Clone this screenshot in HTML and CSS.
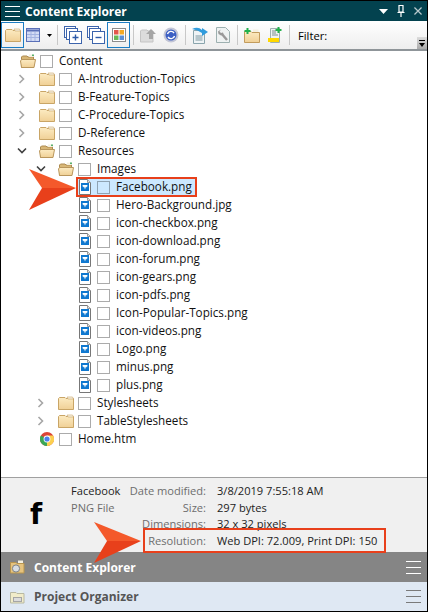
FILE: index.html
```html
<!DOCTYPE html>
<html lang="en">
<head>
  <meta charset="UTF-8" />
  <meta name="viewport" content="width=device-width, initial-scale=1.0"/>
  <title>Content Explorer</title>
  <link rel="stylesheet" href="styles.css">
</head>
<body>

  <svg class="defs" width="0" height="0">
    <defs>
      <linearGradient id="tan" x1="0" y1="0" x2="0" y2="1">
        <stop offset="0" stop-color="#fcebc2"/>
        <stop offset="1" stop-color="#f0d096"/>
      </linearGradient>
      <symbol id="folder" viewBox="0 0 16 14">
        <path d="M.5 13.5V2.5L1.5 1.5H7L8 2.5H15.5V13.5Z" fill="url(#tan)" stroke="#c9a566"/>
        <path d="M9 1H14.5L15.5 3H10Z" fill="#f7f3e6" stroke="#c9a566" stroke-width=".6"/>
      </symbol>
      <symbol id="folder-open" viewBox="0 0 16 14">
        <path d="M1.5 13.5V3L2.5 2H7L8 3H13.5V6H1.5Z" fill="#d8b777" stroke="#ad8a50"/>
        <path d="M9 0.5H13V3H9Z" fill="#f5f1e0"/>
        <path d="M12 .5H14V2H12Z" fill="#56b06d"/>
        <path d="M.5 7L1.5 5.5H15.5L14 13.5H1.5Z" fill="url(#tan)" stroke="#b9965c"/>
      </symbol>
      <symbol id="file" viewBox="0 0 12 16">
        <path d="M.5 .5H8.5L11.5 3.5V15.5H.5Z" fill="#fff" stroke="#777"/>
        <path d="M8.5 .5V3.5H11.5" fill="#e4e4e4" stroke="#999"/>
        <rect x="2" y="4" width="8" height="8" fill="#0f78d0"/>
        <path d="M3.5 6H8.5L8 8.5L7 7.5L6 10.5L5 7.5L4 8.5Z" fill="#fff"/>
      </symbol>
      <symbol id="chrome" viewBox="0 0 14 14">
        <circle cx="7" cy="7" r="7" fill="#db4437"/>
        <path d="M7 7L.9 3.5A7 7 0 0 0 7 14L10.5 7Z" fill="#3aa757"/>
        <path d="M7 3.5H13.1A7 7 0 0 1 7 14Z" fill="#fcd04f"/>
        <circle cx="7" cy="7" r="3.4" fill="#fff"/>
        <circle cx="7" cy="7" r="2.6" fill="#4a80ec"/>
      </symbol>
      <symbol id="chev-right" viewBox="0 0 8 10">
        <path d="M1.5 1L5.5 5L1.5 9" fill="none" stroke="#a6a6a6" stroke-width="1.6"/>
      </symbol>
      <symbol id="chev-down" viewBox="0 0 10 8">
        <path d="M1 1.5L5 5.5L9 1.5" fill="none" stroke="#404040" stroke-width="1.6"/>
      </symbol>
      <symbol id="arrow" viewBox="0 0 47 41">
        <path d="M0 0L47 19L13 19Z" fill="#f4592b"/>
        <path d="M13 19H47L0 41Z" fill="#e8401b"/>
      </symbol>
      <symbol id="stack" viewBox="0 0 18 18">
        <rect x=".5" y=".5" width="11" height="11" fill="#fff" stroke="#3c64ac"/>
        <rect x="2.5" y="2.5" width="11" height="11" fill="#fff" stroke="#3c64ac"/>
        <rect x="5.5" y="5.5" width="12" height="12" fill="#fff" stroke="#3c64ac"/>
      </symbol>
    </defs>
  </svg>

  <div class="panel">
    <div class="titlebar">
      <div class="lines"><i></i><i></i><i></i></div>
      <span class="title">Content Explorer</span>
      <div class="title-btns">
        <svg width="9" height="5" viewBox="0 0 9 5"><path d="M0 0H9L4.5 5Z" fill="#fff"/></svg>
        <svg width="8" height="12" viewBox="0 0 8 12"><path d="M2 .5H6V7H2ZM.5 7.5H7.5M4 8V12" fill="none" stroke="#fff" stroke-width="1.2"/></svg>
        <svg width="8" height="8" viewBox="0 0 9 9"><path d="M.5 .5L8.5 8.5M8.5 .5L.5 8.5" stroke="#b9c9cd" stroke-width="1.4"/></svg>
      </div>
    </div>

    <div class="toolbar">
      <div class="tool active"><svg width="16" height="14"><use href="#folder"/></svg></div>
      <div class="tool grid-tool">
        <svg width="14" height="14" viewBox="0 0 14 14">
          <rect x=".5" y=".5" width="13" height="13" fill="#d3dcf5" stroke="#5a70b8"/>
          <path d="M.5 2.5H13.5" stroke="#5a70b8" stroke-width="2"/>
          <path d="M1 6.5H13M1 9.5H13M5 4V13M9 4V13" stroke="#a3b3e2"/>
        </svg>
        <svg class="caret" width="5" height="3" viewBox="0 0 5 3"><path d="M0 0H5L2.5 3Z" fill="#000"/></svg>
      </div>
      <span class="sep"></span>
      <div class="tool plain">
        <svg width="18" height="18" viewBox="0 0 18 18">
          <use href="#stack"/>
          <path d="M8.5 11.5H14.5M11.5 8.5V14.5" stroke="#2d5aa8" stroke-width="1.4"/>
        </svg>
      </div>
      <div class="tool plain">
        <svg width="18" height="18" viewBox="0 0 18 18">
          <use href="#stack"/>
          <path d="M8.5 11.5H14.5" stroke="#2d5aa8" stroke-width="1.4"/>
        </svg>
      </div>
      <div class="tool active">
        <svg width="14" height="14" viewBox="0 0 14 14">
          <rect x=".5" y=".5" width="13" height="13" fill="#fff" stroke="#8c8c8c"/>
          <rect x="2" y="2" width="4.5" height="4.5" fill="#e2574c"/>
          <rect x="7.5" y="2" width="4.5" height="4.5" fill="#f4a924"/>
          <rect x="2" y="7.5" width="4.5" height="4.5" fill="#67b956"/>
          <rect x="7.5" y="7.5" width="4.5" height="4.5" fill="#5a8fd8"/>
        </svg>
      </div>
      <span class="sep"></span>
      <div class="tool wide">
        <svg width="17" height="15" viewBox="0 0 17 15">
          <path d="M.5 14V3L1.5 2H7L8 3H13V14Z" fill="#dcdcdc" stroke="#c4c4c4"/>
          <path d="M11 1L16 6H13V11H9V6H6Z" fill="#a5a5a5"/>
        </svg>
      </div>
      <div class="tool wide">
        <svg width="16" height="16" viewBox="0 0 16 16">
          <circle cx="8" cy="8" r="7.5" fill="#c3c6d6"/>
          <circle cx="8" cy="8" r="5.5" fill="#3c5fc4"/>
          <path d="M4.5 7A3.6 3.6 0 0 1 11 6M11.5 9A3.6 3.6 0 0 1 5 10" fill="none" stroke="#fff" stroke-width="1.4"/>
        </svg>
      </div>
      <span class="sep"></span>
      <div class="tool wide">
        <svg width="16" height="17" viewBox="0 0 16 17">
          <path d="M1.5 3.5H12.5V16.5H1.5Z" fill="#eef3f5" stroke="#8aa5ad"/>
          <path d="M3.5 9H10.5M3.5 11H10.5M3.5 13H10.5" stroke="#7d97a0"/>
          <path d="M0 2Q6 -1 10 3V1L16 5L10 9V6Q6 3 0 2Z" fill="#2f9bdc"/>
        </svg>
      </div>
      <div class="tool wide">
        <svg width="14" height="16" viewBox="0 0 14 16">
          <path d="M.5 .5H9.5L13.5 4.5V15.5H.5Z" fill="#eef2f2" stroke="#9db0b0"/>
          <path d="M5.5 6.5L11 13" stroke="#999" stroke-width="2.4"/>
          <path d="M5 2.5L3.5 4.5L5 6L7 5.5L7.5 7.5L5 8.5L2.5 7L2 4.5Z" fill="#999"/>
        </svg>
      </div>
      <span class="sep"></span>
      <div class="tool wide">
        <svg width="16" height="15" viewBox="0 0 16 15">
          <path d="M.5 14.5V3.5H7L8 4.5H15.5V14.5Z" fill="url(#tan)" stroke="#c29c5d"/>
          <path d="M9 1.5H14.5V4H9Z" fill="#f5f1e0"/>
          <path d="M2.5 0H4.5V2H6.5V4H4.5V6H2.5V4H.5V2H2.5Z" fill="#22b14c"/>
        </svg>
      </div>
      <div class="tool wide">
        <svg width="14" height="16" viewBox="0 0 14 16">
          <path d="M2.5 1.5H11.5V15.5H2.5Z" fill="#eef3f3" stroke="#9db0b0"/>
          <path d="M4 4H8M4 6H8M4 8H10" stroke="#7d8f8f"/>
          <rect x="0" y="11" width="11" height="4" fill="#ffd800"/>
          <path d="M9.5 0H11.5V2H13.5V4H11.5V6H9.5V4H7.5V2H9.5Z" fill="#22b14c"/>
        </svg>
      </div>
      <span class="sep"></span>
      <span class="filter">Filter:</span>
      <div class="overflow">
        <svg width="6" height="7" viewBox="0 0 6 7"><path d="M0 0H6V1H0ZM0 3H6L3 7Z" fill="#000"/></svg>
      </div>
    </div>

    <div class="tree">
      <div class="row d0">
        <span class="twist"></span>
        <div class="item"><svg class="icon" width="16" height="14"><use href="#folder-open"/></svg><span class="check"></span><span class="label-text">Content</span></div>
      </div>
      <div class="row d1">
        <span class="twist"><svg width="8" height="10"><use href="#chev-right"/></svg></span>
        <div class="item"><svg class="icon" width="16" height="14"><use href="#folder"/></svg><span class="check"></span><span class="label-text">A-Introduction-Topics</span></div>
      </div>
      <div class="row d1">
        <span class="twist"><svg width="8" height="10"><use href="#chev-right"/></svg></span>
        <div class="item"><svg class="icon" width="16" height="14"><use href="#folder"/></svg><span class="check"></span><span class="label-text">B-Feature-Topics</span></div>
      </div>
      <div class="row d1">
        <span class="twist"><svg width="8" height="10"><use href="#chev-right"/></svg></span>
        <div class="item"><svg class="icon" width="16" height="14"><use href="#folder"/></svg><span class="check"></span><span class="label-text">C-Procedure-Topics</span></div>
      </div>
      <div class="row d1">
        <span class="twist"><svg width="8" height="10"><use href="#chev-right"/></svg></span>
        <div class="item"><svg class="icon" width="16" height="14"><use href="#folder"/></svg><span class="check"></span><span class="label-text">D-Reference</span></div>
      </div>
      <div class="row d1">
        <span class="twist"><svg class="down" width="10" height="8"><use href="#chev-down"/></svg></span>
        <div class="item"><svg class="icon" width="16" height="14"><use href="#folder-open"/></svg><span class="check"></span><span class="label-text">Resources</span></div>
      </div>
      <div class="row d2">
        <span class="twist"><svg class="down" width="10" height="8"><use href="#chev-down"/></svg></span>
        <div class="item"><svg class="icon" width="16" height="14"><use href="#folder-open"/></svg><span class="check"></span><span class="label-text">Images</span></div>
      </div>
      <div class="row d3">
        <span class="twist"></span>
        <div class="item selected"><svg class="icon file" width="12" height="16"><use href="#file"/></svg><span class="check"></span><span class="label-text">Facebook.png</span></div>
      </div>
      <div class="row d3">
        <span class="twist"></span>
        <div class="item"><svg class="icon file" width="12" height="16"><use href="#file"/></svg><span class="check"></span><span class="label-text">Hero-Background.jpg</span></div>
      </div>
      <div class="row d3">
        <span class="twist"></span>
        <div class="item"><svg class="icon file" width="12" height="16"><use href="#file"/></svg><span class="check"></span><span class="label-text">icon-checkbox.png</span></div>
      </div>
      <div class="row d3">
        <span class="twist"></span>
        <div class="item"><svg class="icon file" width="12" height="16"><use href="#file"/></svg><span class="check"></span><span class="label-text">icon-download.png</span></div>
      </div>
      <div class="row d3">
        <span class="twist"></span>
        <div class="item"><svg class="icon file" width="12" height="16"><use href="#file"/></svg><span class="check"></span><span class="label-text">icon-forum.png</span></div>
      </div>
      <div class="row d3">
        <span class="twist"></span>
        <div class="item"><svg class="icon file" width="12" height="16"><use href="#file"/></svg><span class="check"></span><span class="label-text">icon-gears.png</span></div>
      </div>
      <div class="row d3">
        <span class="twist"></span>
        <div class="item"><svg class="icon file" width="12" height="16"><use href="#file"/></svg><span class="check"></span><span class="label-text">icon-pdfs.png</span></div>
      </div>
      <div class="row d3">
        <span class="twist"></span>
        <div class="item"><svg class="icon file" width="12" height="16"><use href="#file"/></svg><span class="check"></span><span class="label-text">Icon-Popular-Topics.png</span></div>
      </div>
      <div class="row d3">
        <span class="twist"></span>
        <div class="item"><svg class="icon file" width="12" height="16"><use href="#file"/></svg><span class="check"></span><span class="label-text">icon-videos.png</span></div>
      </div>
      <div class="row d3">
        <span class="twist"></span>
        <div class="item"><svg class="icon file" width="12" height="16"><use href="#file"/></svg><span class="check"></span><span class="label-text">Logo.png</span></div>
      </div>
      <div class="row d3">
        <span class="twist"></span>
        <div class="item"><svg class="icon file" width="12" height="16"><use href="#file"/></svg><span class="check"></span><span class="label-text">minus.png</span></div>
      </div>
      <div class="row d3">
        <span class="twist"></span>
        <div class="item"><svg class="icon file" width="12" height="16"><use href="#file"/></svg><span class="check"></span><span class="label-text">plus.png</span></div>
      </div>
      <div class="row d2">
        <span class="twist"><svg width="8" height="10"><use href="#chev-right"/></svg></span>
        <div class="item"><svg class="icon" width="16" height="14"><use href="#folder"/></svg><span class="check"></span><span class="label-text">Stylesheets</span></div>
      </div>
      <div class="row d2">
        <span class="twist"><svg width="8" height="10"><use href="#chev-right"/></svg></span>
        <div class="item"><svg class="icon" width="16" height="14"><use href="#folder"/></svg><span class="check"></span><span class="label-text">TableStylesheets</span></div>
      </div>
      <div class="row d1">
        <span class="twist"></span>
        <div class="item"><svg class="icon round" width="14" height="14"><use href="#chrome"/></svg><span class="check"></span><span class="label-text">Home.htm</span></div>
      </div>
    </div>

    <div class="details">
      <div class="preview">f</div>
      <div class="meta">
        <span class="name">Facebook</span><span class="label">Date modified:</span><span class="value">3/8/2019 7:55:18 AM</span>
        <span class="kind">PNG File</span><span class="label">Size:</span><span class="value">297 bytes</span>
        <span></span><span class="label">Dimensions:</span><span class="value">32 x 32 pixels</span>
        <span></span><span class="label">Resolution:</span><span class="value">Web DPI: 72.009, Print DPI: 150</span>
      </div>
    </div>

    <div class="tab tab-active">
      <svg width="15" height="14" viewBox="0 0 15 14">
        <path d="M.5 13V2.5H6L7 3.5H14V13Z" fill="#e6c37e" stroke="#b8954f"/>
        <path d="M8 .5H13V3H8Z" fill="#f5f1e0"/>
        <circle cx="6" cy="8.5" r="3.6" fill="#d8dde2" stroke="#7b8187"/>
      </svg>
      <span>Content Explorer</span>
      <div class="lines"><i></i><i></i><i></i></div>
    </div>
    <div class="tab tab-last">
      <svg width="15" height="14" viewBox="0 0 15 14">
        <path d="M.5 13V2.5H6L7 3.5H14V13Z" fill="#f1ecc9" stroke="#b9b9a2"/>
        <path d="M8 .5H13V3H8Z" fill="#e6f0ea"/>
        <rect x="3.5" y="7.5" width="8" height="4" fill="#dcdcdc" stroke="#a5a5a5"/>
      </svg>
      <span>Project Organizer</span>
      <div class="lines"><i></i><i></i><i></i></div>
    </div>

    <!-- callouts drawn over the screenshot -->
    <div class="res-box"></div>
    <svg class="callout callout-tree" width="47" height="41"><use href="#arrow"/></svg>
    <svg class="callout callout-res" width="47" height="41"><use href="#arrow"/></svg>
  </div>

</body>
</html>
```

FILE: styles.css
```css
* {
  box-sizing: border-box;
}
body {
  margin: 0;
  font-family: "Open Sans", sans-serif;
  font-size: 11.7px;
  color: #111;
}
.defs {
  position: absolute;
}
.panel {
  position: relative;
  width: 428px;
  height: 612px;
  border: 1px solid #000;
  display: flex;
  flex-direction: column;
  overflow: hidden;
  background: #fff;
}

/* title bar */
.titlebar {
  height: 20px;
  flex: none;
  background: #03424f;
  color: #fff;
  display: flex;
  align-items: center;
  padding-left: 4px;
}
.title {
  font-weight: 700;
  font-size: 12px;
  margin-left: 5px;
}
.title-btns {
  margin-left: auto;
  display: flex;
  align-items: center;
  gap: 9px;
  padding-right: 5px;
}
.lines {
  width: 15px;
  display: flex;
  flex-direction: column;
  gap: 4px;
}
.lines i {
  display: block;
  height: 1px;
  background: #fff;
}

/* toolbar */
.toolbar {
  position: relative;
  height: 30px;
  flex: none;
  display: flex;
  align-items: center;
  background: linear-gradient(#fff, #eeeeee);
  border-bottom: 2px solid #8f9599;
}
.tool {
  height: 26px;
  display: flex;
  align-items: center;
  justify-content: center;
  flex: none;
}
.active {
  width: 23px;
  border: 1px solid #1c7dc4;
}
.grid-tool {
  width: 30px;
  justify-content: flex-start;
  padding-left: 2px;
}
.caret {
  margin-left: 7px;
}
.plain {
  width: 23px;
}
.wide {
  width: 22.5px;
}
.sep {
  width: 1px;
  height: 20px;
  margin: 0 3px;
  background: #c8c8c8;
  flex: none;
}
.filter {
  margin-left: 5px;
  font-size: 11.2px;
  color: #000;
}
.overflow {
  position: absolute;
  right: 0;
  bottom: 0;
  width: 10px;
  height: 12px;
  background: linear-gradient(#ddd, #aaa);
  display: flex;
  align-items: center;
  justify-content: center;
}

/* tree */
.tree {
  flex: 1;
  padding-top: 1px;
}
.row {
  height: 18px;
  display: flex;
  align-items: center;
}
.d1 { padding-left: 19px; }
.d2 { padding-left: 38px; }
.d3 { padding-left: 57px; }
.twist {
  width: 19px;
  flex: none;
  display: flex;
  align-items: center;
}
.twist svg {
  margin-left: -2px;
}
.twist .down {
  margin-left: -3px;
}
.item {
  display: flex;
  align-items: center;
  height: 18px;
}
.icon {
  flex: none;
  margin-right: 4px;
}
.icon.file {
  margin-left: 2px;
  margin-right: 6px;
}
.icon.round {
  margin-left: 1px;
  margin-right: 5px;
}
.check {
  width: 13px;
  height: 13px;
  flex: none;
  border: 1px solid #ababab;
  background: #fff;
  margin-right: 6px;
}
.label-text {
  margin-bottom: 2px;
  white-space: nowrap;
}
.selected {
  background: #cce8ff;
  outline: 2px solid #e8401b;
  outline-offset: -1px;
  padding-right: 4px;
}
.selected .check {
  background: #cce8ff;
  border-color: #8fa3b3;
}

/* details */
.details {
  height: 75px;
  flex: none;
  background: #f0f0f0;
  border-top: 1px solid #a0a0a0;
  display: flex;
  padding-top: 4px;
  font-size: 11.1px;
}
.preview {
  width: 70px;
  flex: none;
  text-align: center;
  font-family: "DejaVu Sans", sans-serif;
  font-weight: 700;
  font-size: 28px;
  line-height: 40px;
  color: #000;
  padding-top: 13px;
}
.meta {
  display: grid;
  grid-template-columns: 55px 80px auto;
  grid-auto-rows: 16.7px;
  align-items: center;
  white-space: nowrap;
}
.name {
  color: #222;
}
.kind, .label {
  color: #6d6d6d;
}
.label {
  text-align: right;
}
.value {
  margin-left: 11px;
  color: #222;
}

/* bottom tabs */
.tab {
  height: 30px;
  flex: none;
  background: #dfe8f3;
  color: #555;
  font-weight: 700;
  font-size: 12px;
  display: flex;
  align-items: center;
  padding: 0 6px 0 9px;
}
.tab-last {
  height: 29px;
}
.tab span {
  margin-left: 9px;
}
.tab .lines {
  margin-left: auto;
  gap: 5px;
}
.tab .lines i {
  background: #7a7a7a;
}
.tab-active {
  background: #858585;
  color: #fff;
}
.tab-active .lines i {
  background: #fff;
}

/* callouts */
.res-box {
  position: absolute;
  left: 142px;
  top: 527px;
  width: 243px;
  height: 25px;
  border: 2px solid #e8401b;
}
.callout {
  position: absolute;
}
.callout-tree {
  left: 28px;
  top: 168px;
}
.callout-res {
  left: 93px;
  top: 521px;
}
```
